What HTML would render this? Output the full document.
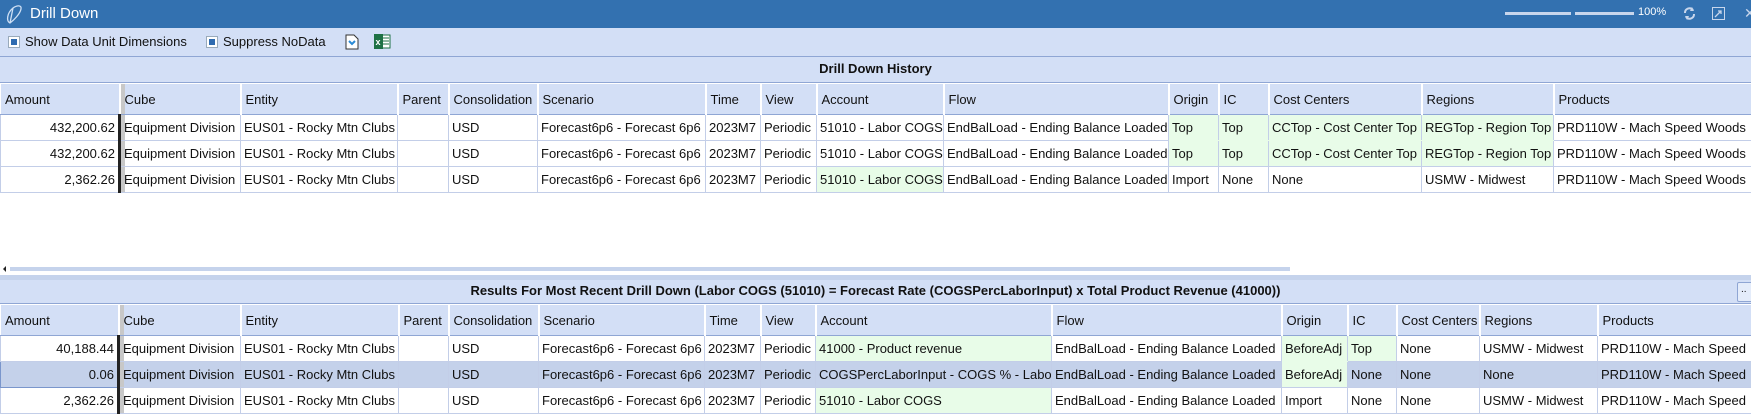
<!DOCTYPE html>
<html><head><meta charset="utf-8">
<style>
*{margin:0;padding:0;box-sizing:border-box}
body{width:1751px;height:420px;overflow:hidden;background:#fff;font-family:"Liberation Sans",sans-serif;font-size:13px;color:#111;position:relative}
.abs{position:absolute}
#title{left:0;top:0;width:1751px;height:28px;background:#3371b0;color:#fff}
#tb{left:0;top:28px;width:1751px;height:29px;background:#d3dff6;border-bottom:1px solid #8fa6d4}
.chk{position:absolute;top:8px;width:12px;height:12px;background:#fff;border:1px solid #9ab}
.chk:after{content:"";position:absolute;left:2px;top:2px;width:6px;height:6px;background:#2f6bb0}
.hbar{background:#d3dff6;border-bottom:1px solid #8fa6d4;text-align:center;font-weight:bold;font-size:13px}
table{border-collapse:collapse;table-layout:fixed;position:absolute;left:0}
td{border:1px solid #c3cee8;white-space:nowrap;overflow:hidden;padding:0 3px;height:26px;font-size:13px}
tr.h td{background:#d3dff6;border:1px solid #fff;border-right:2px solid #fff;height:31px;border-bottom:1px solid #8fa6d4;padding-left:4px}
td.r{text-align:right;border-right:none}
td.th{border-left:3px solid #222;box-shadow:inset 4px 0 0 #c8c8c8}
td.g{background:#e8fce8}
td.gn{background:#e8fce8;border-bottom-color:#e8fce8}
tr.sel td{background:#c4d1ea}
tr.sel td.g{background:#e8fce8}
</style></head><body>
<div id="title" class="abs">
 <svg class="abs" style="left:4px;top:3px" width="20" height="22" viewBox="0 0 20 22"><path d="M6 20 C2 18 3 10 9 5 C13 2 18 2 17 6 C16 11 10 17 6 20 Z M9 5 L6 20" fill="none" stroke="#cfe0f5" stroke-width="1.3"/></svg>
 <div class="abs" style="left:30px;top:5px;font-size:15px">Drill Down</div>
 <div class="abs" style="left:1505px;top:12px;width:66px;height:3px;background:#c8d6ec"></div>
 <div class="abs" style="left:1575px;top:12px;width:59px;height:3px;background:#c8d6ec"></div>
 <div class="abs" style="left:1638px;top:6px;font-size:11px">100%</div>
 <svg class="abs" style="left:1683px;top:7px" width="13" height="13" viewBox="0 0 13 13"><path d="M2 6 A4.5 4.5 0 0 1 10 3 M11 7 A4.5 4.5 0 0 1 3 10" fill="none" stroke="#c8d6ec" stroke-width="2"/><path d="M9 0 L11 4 L7 4Z M4 13 L2 9 L6 9Z" fill="#c8d6ec"/></svg>
 <svg class="abs" style="left:1712px;top:7px" width="13" height="13" viewBox="0 0 13 13"><rect x="0.5" y="0.5" width="12" height="12" fill="none" stroke="#c8d6ec"/><path d="M3 10 L9 4 M6 4 H9 V7" stroke="#c8d6ec" fill="none" stroke-width="1.3"/></svg>
 <div class="abs" style="left:1744px;top:5px;font-size:14px;color:#c8d6ec">✕</div>
</div>
<div id="tb" class="abs">
 <div class="chk" style="left:8px"></div><div class="abs" style="left:25px;top:6px">Show Data Unit Dimensions</div>
 <div class="chk" style="left:206px"></div><div class="abs" style="left:223px;top:6px">Suppress NoData</div>
 <svg class="abs" style="left:345px;top:6px" width="14" height="16" viewBox="0 0 14 16"><path d="M1 1 H9 L13 5 V15 H1 Z" fill="#fff" stroke="#333"/><path d="M4 7 L7 10 L10 7" stroke="#2a8ad6" stroke-width="2" fill="none"/></svg>
 <svg class="abs" style="left:374px;top:5px" width="17" height="17" viewBox="0 0 17 17"><rect x="6" y="2" width="10" height="13" fill="#fff" stroke="#1e7145"/><path d="M9 5H15M9 8H15M9 11H15" stroke="#1e7145"/><rect x="0" y="1" width="9" height="15" fill="#1e7145"/><text x="1.5" y="12" font-size="9" fill="#fff" font-family="Liberation Sans" font-weight="bold">x</text></svg>
</div>
<div class="abs hbar" style="left:0;top:57px;width:1751px;height:26px;line-height:24px">Drill Down History</div>
<table style="top:83px;width:1751px">
<colgroup><col width="119"><col width="121"><col width="157"><col width="51"><col width="89"><col width="168"><col width="55"><col width="56"><col width="127"><col width="225"><col width="50"><col width="50"><col width="153"><col width="132"><col width="198"></colgroup>
<tr class="h"><td>Amount</td><td class="th">Cube</td><td>Entity</td><td>Parent</td><td>Consolidation</td><td>Scenario</td><td>Time</td><td>View</td><td>Account</td><td>Flow</td><td>Origin</td><td>IC</td><td>Cost Centers</td><td>Regions</td><td>Products</td></tr>
<tr><td class="r">432,200.62</td><td class="th">Equipment Division</td><td>EUS01 - Rocky Mtn Clubs</td><td></td><td>USD</td><td>Forecast6p6 - Forecast 6p6</td><td>2023M7</td><td>Periodic</td><td>51010 - Labor COGS</td><td>EndBalLoad - Ending Balance Loaded</td><td class="gn">Top</td><td class="gn">Top</td><td class="gn">CCTop - Cost Center Top</td><td class="gn">REGTop - Region Top</td><td>PRD110W - Mach Speed Woods</td></tr>
<tr><td class="r">432,200.62</td><td class="th">Equipment Division</td><td>EUS01 - Rocky Mtn Clubs</td><td></td><td>USD</td><td>Forecast6p6 - Forecast 6p6</td><td>2023M7</td><td>Periodic</td><td>51010 - Labor COGS</td><td>EndBalLoad - Ending Balance Loaded</td><td class="g">Top</td><td class="g">Top</td><td class="g">CCTop - Cost Center Top</td><td class="g">REGTop - Region Top</td><td>PRD110W - Mach Speed Woods</td></tr>
<tr><td class="r">2,362.26</td><td class="th">Equipment Division</td><td>EUS01 - Rocky Mtn Clubs</td><td></td><td>USD</td><td>Forecast6p6 - Forecast 6p6</td><td>2023M7</td><td>Periodic</td><td class="g">51010 - Labor COGS</td><td>EndBalLoad - Ending Balance Loaded</td><td>Import</td><td>None</td><td>None</td><td>USMW - Midwest</td><td>PRD110W - Mach Speed Woods</td></tr>
</table>
<div class="abs" style="left:3px;top:266px;width:0;height:0;border:3px solid transparent;border-right-color:#222;border-left:none"></div>
<div class="abs" style="left:10px;top:267px;width:1280px;height:4px;background:#c5d3ec"></div>
<div class="abs" style="left:0;top:275px;width:1751px;height:5px;background:#c5d3ec"></div>
<div class="abs hbar" style="left:0;top:280px;width:1751px;height:24px;line-height:22px">Results For Most Recent Drill Down (Labor COGS (51010) = Forecast Rate (COGSPercLaborInput) x Total Product Revenue (41000))</div>
<div class="abs" style="left:1737px;top:282px;width:16px;height:20px;border:1px solid #8fa6d4;background:#e4ecfa;border-radius:2px;font-size:10px;line-height:14px;padding-left:3px">..</div>
<table style="top:304px;width:1751px">
<colgroup><col width="118"><col width="122"><col width="158"><col width="50"><col width="90"><col width="166"><col width="56"><col width="55"><col width="236"><col width="230"><col width="66"><col width="49"><col width="83"><col width="118"><col width="154"></colgroup>
<tr class="h"><td>Amount</td><td class="th">Cube</td><td>Entity</td><td>Parent</td><td>Consolidation</td><td>Scenario</td><td>Time</td><td>View</td><td>Account</td><td>Flow</td><td>Origin</td><td>IC</td><td>Cost Centers</td><td>Regions</td><td>Products</td></tr>
<tr><td class="r">40,188.44</td><td class="th">Equipment Division</td><td>EUS01 - Rocky Mtn Clubs</td><td></td><td>USD</td><td>Forecast6p6 - Forecast 6p6</td><td>2023M7</td><td>Periodic</td><td class="g">41000 - Product revenue</td><td>EndBalLoad - Ending Balance Loaded</td><td class="gn">BeforeAdj</td><td class="g">Top</td><td>None</td><td>USMW - Midwest</td><td>PRD110W - Mach Speed</td></tr>
<tr class="sel"><td class="r" style="border:1px solid #7a96cc">0.06</td><td class="th">Equipment Division</td><td>EUS01 - Rocky Mtn Clubs</td><td></td><td>USD</td><td>Forecast6p6 - Forecast 6p6</td><td>2023M7</td><td>Periodic</td><td>COGSPercLaborInput - COGS % - Labor</td><td>EndBalLoad - Ending Balance Loaded</td><td class="g">BeforeAdj</td><td>None</td><td>None</td><td>None</td><td>PRD110W - Mach Speed</td></tr>
<tr><td class="r" style="height:25px">2,362.26</td><td class="th">Equipment Division</td><td>EUS01 - Rocky Mtn Clubs</td><td></td><td>USD</td><td>Forecast6p6 - Forecast 6p6</td><td>2023M7</td><td>Periodic</td><td class="g">51010 - Labor COGS</td><td>EndBalLoad - Ending Balance Loaded</td><td>Import</td><td>None</td><td>None</td><td>USMW - Midwest</td><td>PRD110W - Mach Speed</td></tr>
</table>
</body></html>
